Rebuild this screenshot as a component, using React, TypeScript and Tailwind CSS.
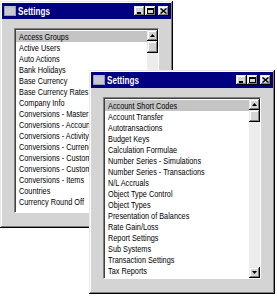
const raised =
  "shadow-[inset_-1px_-1px_0_#000,inset_1px_1px_0_#e8e8e8,inset_-2px_-2px_0_#808080,inset_2px_2px_0_#fff]";

const font = "font-['Liberation_Sans',Arial,sans-serif]";

const leftItems = [
  "Access Groups",
  "Active Users",
  "Auto Actions",
  "Bank Holidays",
  "Base Currency",
  "Base Currency Rates",
  "Company Info",
  "Conversions - Master",
  "Conversions - Accounts",
  "Conversions - Activity Types",
  "Conversions - Currencies",
  "Conversions - Customers",
  "Conversions - Customer Categories",
  "Conversions - Items",
  "Countries",
  "Currency Round Off",
];

const rightItems = [
  "Account Short Codes",
  "Account Transfer",
  "Autotransactions",
  "Budget Keys",
  "Calculation Formulae",
  "Number Series - Simulations",
  "Number Series - Transactions",
  "N/L Accruals",
  "Object Type Control",
  "Object Types",
  "Presentation of Balances",
  "Rate Gain/Loss",
  "Report Settings",
  "Sub Systems",
  "Transaction Settings",
  "Tax Reports",
];

const TitleButton = ({ kind }: { kind: "min" | "max" | "close" }) => (
  <div className={`w-[11px] h-[10px] bg-[#d4d4d4] flex items-center justify-center ${raised}`}>
    <svg width="7" height="6" viewBox="0 0 7 6">
      {kind === "min" && <rect x="1" y="4" width="4" height="2" fill="#000" />}
      {kind === "max" && (
        <g fill="none" stroke="#000">
          <rect x="0.5" y="0.5" width="6" height="5" />
          <line x1="0" y1="1.5" x2="7" y2="1.5" />
        </g>
      )}
      {kind === "close" && (
        <path d="M0.5 0.5 L6.5 5.5 M6.5 0.5 L0.5 5.5" stroke="#000" strokeWidth="1.4" />
      )}
    </svg>
  </div>
);

const ArrowButton = ({ down }: { down?: boolean }) => (
  <div className={`w-[11px] h-[11px] bg-[#d4d4d4] flex items-center justify-center ${raised}`}>
    <svg width="5" height="3" viewBox="0 0 5 3">
      <path d={down ? "M0 0 H5 L2.5 3 Z" : "M2.5 0 L5 3 H0 Z"} fill="#000" />
    </svg>
  </div>
);

const TitleBar = () => (
  <div className="h-[16px] bg-[#000080] flex items-center pl-[2px] pr-[2px]">
    <svg width="12" height="10" viewBox="0 0 12 10" className="mr-[2px] shrink-0">
      <rect x="0" y="0" width="12" height="10" fill="#9a9ab0" />
      <rect x="1" y="2" width="10" height="7" fill="#c8c8d0" />
      <rect x="1" y="0.5" width="10" height="1" fill="#e0e0e8" />
    </svg>
    <span
      className={`inline-block origin-left scale-x-[0.77] text-white font-bold text-[10.5px] leading-none ${font}`}
    >
      Settings
    </span>
    <div className="ml-auto flex">
      <TitleButton kind="min" />
      <TitleButton kind="max" />
      <div className="ml-[2px]">
        <TitleButton kind="close" />
      </div>
    </div>
  </div>
);

const ListBox = ({ items, showDown }: { items: string[]; showDown?: boolean }) => (
  <div className="h-full flex border-t border-l border-t-[#808080] border-l-[#808080] border-b border-r border-b-white border-r-white">
    <div className="flex-1 flex border-t border-l border-t-[#404040] border-l-[#404040] bg-white min-w-0">
      <div className="flex-1 min-w-0 overflow-hidden pt-[1px]">
        {items.map((item, i) => (
          <div
            key={item}
            className={`h-[11px] leading-[11px] pl-[3px] text-[9.5px] text-black whitespace-nowrap ${font} ${
              i === 0 ? "bg-[#c4c4c4]" : ""
            }`}
          >
            <span className="inline-block origin-left scale-x-[0.77]">{item}</span>
          </div>
        ))}
      </div>
      <div className="w-[11px] flex flex-col bg-[#ececec]">
        <ArrowButton />
        <div className={`h-[12px] bg-[#d4d4d4] ${raised}`} />
        <div className="flex-1" />
        {showDown && <ArrowButton down />}
      </div>
    </div>
  </div>
);

const SettingsWindow = ({
  className,
  items,
  showDown,
}: {
  className: string;
  items: string[];
  showDown?: boolean;
}) => (
  <div className={`absolute bg-[#d4d4d4] p-[2px] flex flex-col ${raised} ${className}`}>
    <TitleBar />
    <div className="flex-1 min-h-0 pt-[9px] pl-[12px] pr-[12px] pb-[13px]">
      <ListBox items={items} showDown={showDown} />
    </div>
  </div>
);

export default function App() {
  return (
    <div className="relative w-[277px] h-[298px] bg-white overflow-hidden">
      <SettingsWindow className="left-0 top-[1px] w-[173px] h-[227px]" items={leftItems} />
      <SettingsWindow className="left-[89px] top-[70px] w-[186px] h-[224px]" items={rightItems} showDown />
    </div>
  );
}
